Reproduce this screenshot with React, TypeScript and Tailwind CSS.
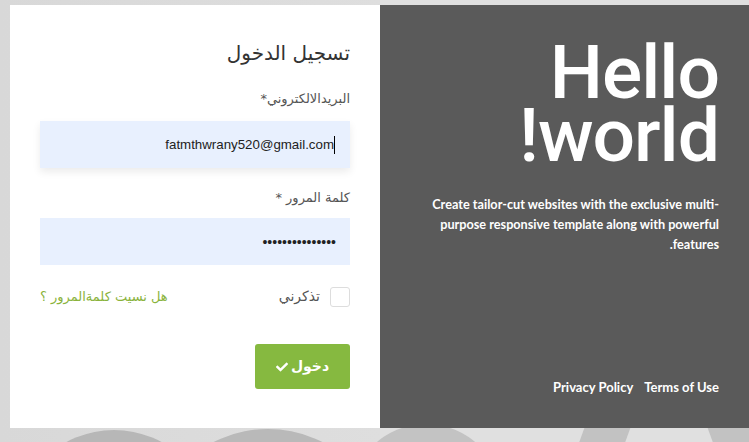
import React from 'react';
import { FaCheck } from 'react-icons/fa';

const arabic = { fontFamily: '"DejaVu Sans", "Noto Sans", sans-serif' };

const Backdrop: React.FC = () => (
  <div className="absolute inset-0 overflow-hidden" aria-hidden="true">
    <div className="absolute left-0 top-0 h-full w-[380px] bg-gradient-to-r from-[#d8d8d8] to-[#dedede]" />
    <div className="absolute left-[14px] top-[430px] h-[200px] w-[200px] rounded-full bg-[#b7b7b7]" />
    <div className="absolute left-[148px] top-[429px] h-[240px] w-[240px] rounded-full bg-[#b9b9b9]" />
    <div className="absolute left-[350px] top-[424px] h-[152px] w-[152px] rounded-full bg-[#c3c3c3]" />
    <div className="absolute left-[580px] top-[400px] h-[80px] w-[46px] -skew-x-[20deg] bg-[#c2c2c2]" />
    <div className="absolute left-[712px] top-[400px] h-[80px] w-[48px] skew-x-[20deg] bg-[#c2c2c2]" />
  </div>
);

const LoginForm: React.FC = () => (
  <div className="w-[370px] bg-white px-[30px] pt-[28px]" style={arabic}>
    <h1 className="text-[20px] leading-[40px] text-[#333]">تسجيل الدخول</h1>

    <label className="mt-[16px] block text-[13px] leading-[20px] text-[#555]">البريدالالكتروني*</label>
    <div className="relative mt-[12px]">
      <input
        dir="ltr"
        readOnly
        value="fatmthwrany520@gmail.com"
        className="h-[47px] w-full bg-[#e8f0fe] pr-[16px] text-right text-[13.3px] text-[#222] shadow-[0_4px_8px_rgba(0,0,0,0.08)] outline-none"
        style={{ fontFamily: '"Liberation Sans", Arial, sans-serif' }}
      />
      <span className="absolute right-[15px] top-[15px] h-[18px] w-px bg-black" />
    </div>

    <label className="mt-[20px] block text-[13px] leading-[20px] text-[#555]">كلمة المرور *</label>
    <input
      dir="ltr"
      type="password"
      readOnly
      value="123456789012345"
      className="mt-[10px] h-[47px] w-full bg-[#e8f0fe] pr-[14px] text-right text-[14px] text-[#222] outline-none"
      style={{ fontFamily: '"Liberation Sans", Arial, sans-serif' }}
    />

    <div className="mt-[21px] flex items-center justify-between">
      <label className="flex items-center gap-[10px]">
        <span className="h-[20px] w-[20px] rounded-[3px] border border-[#dddddd] bg-white" />
        <span className="text-[14px] text-[#555]">تذكرني</span>
      </label>
      <a className="text-[13px] text-[#8ab33c]">هل نسيت كلمةالمرور ؟</a>
    </div>

    <button className="mt-[37px] flex h-[45px] w-[95px] items-center justify-center gap-[3px] rounded-[3px] bg-[#86b940] text-[14px] font-bold text-white">
      <span>دخول</span>
      <FaCheck className="h-[12px] w-[12px]" />
    </button>
  </div>
);

const Welcome: React.FC = () => (
  <div
    className="flex flex-1 flex-col bg-[#5a5a5a] pl-[20px] pr-[30px] pt-[36px] pb-[31px] text-white"
    style={{ fontFamily: 'Lato, "Open Sans", sans-serif' }}
  >
    <h2
      className="text-[75px] font-medium leading-[63px] tracking-[-1px]"
      style={{ fontFamily: 'Roboto, "Open Sans", sans-serif' }}
    >
      Hello world!
    </h2>
    <p className="mt-[27px] text-[12.7px] font-bold leading-[20px]">
      Create tailor-cut websites with the exclusive multi-purpose responsive template along with powerful features.
    </p>
    <div className="mt-auto flex gap-[11px] text-[13px] font-bold">
      <a>Terms of Use</a>
      <a>Privacy Policy</a>
    </div>
  </div>
);

export default function App() {
  return (
    <div className="relative h-[442px] w-[749px] overflow-hidden bg-[#e0e0e0]">
      <Backdrop />
      <div className="relative ml-[10px] mt-[5px] flex h-[423px] w-[739px]" dir="rtl">
        <Welcome />
        <LoginForm />
      </div>
    </div>
  );
}
